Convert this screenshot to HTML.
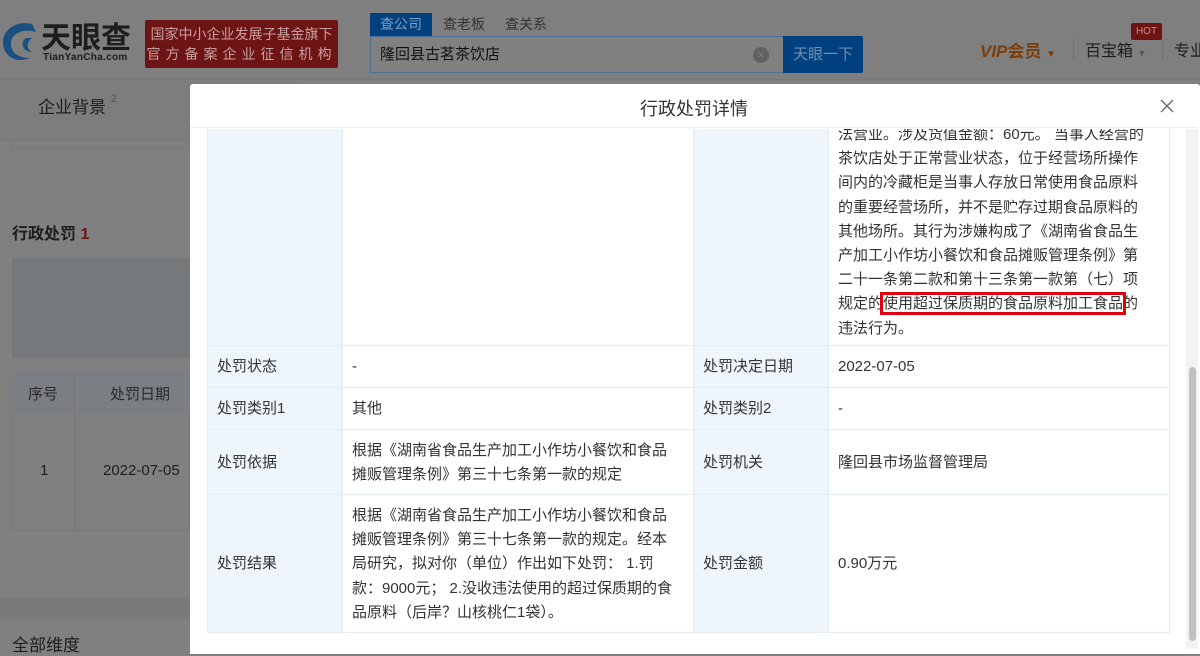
<!DOCTYPE html>
<html><head><meta charset="utf-8">
<style>
*{margin:0;padding:0;box-sizing:border-box}
body{width:1200px;height:649px;overflow:hidden;position:relative;background:#808080;font-family:"Liberation Sans","Noto Sans CJK SC",sans-serif;color:#333}
.a{position:absolute;white-space:nowrap}
.hdr{left:0;top:0;width:1200px;height:80px;background:#7f7f7f;border-bottom:1px solid #777}
td{border:1px solid #e4ecf3;font-size:15px;line-height:24.2px;color:#333;vertical-align:middle;padding:2px 12px 0 9px;font-family:"Liberation Sans","Noto Sans CJK SC",sans-serif}
td.l{background:#eef5fb}
td.r{padding-right:25px}
table{border-collapse:collapse;table-layout:fixed}
</style></head><body>
<div class="a hdr"></div>
<svg class="a" style="left:0;top:18px" width="40" height="46" viewBox="0 0 40 46"><path d="M32 6 C16 2 2 12 3 26 C4 38 16 46 30 40 C18 40 10 34 11 24 C12 16 22 10 36 14 Z" fill="#1b4f80"/><path d="M26 20 C20 24 22 34 32 34 C26 30 26 25 32 20 Z" fill="#1b4f80"/></svg>
<div class="a" style="left:41px;top:16px;font-size:30px;font-weight:bold;color:#1d1d1d;font-family:'Noto Sans CJK SC',sans-serif;line-height:38px">天眼查</div>
<div class="a" style="left:43px;top:52px;font-size:10px;color:#1d1d1d;font-weight:bold;letter-spacing:0.3px">TianYanCha.com</div>
<div class="a" style="left:145px;top:20px;width:193px;height:48px;background:#6d1414;border-radius:2px;color:#c9a0a0;font-size:14px;text-align:center;line-height:20px;padding-top:4px;font-family:'Noto Sans CJK SC',sans-serif">国家中小企业发展子基金旗下<br><span style="letter-spacing:5px">官方备案企业征信机构</span></div>
<div class="a" style="left:370px;top:13px;width:62px;height:23px;background:#00407f;color:#7f9fbf;font-size:14px;text-align:center;line-height:23px">查公司</div>
<div class="a" style="left:443px;top:13px;font-size:14px;line-height:23px;color:#333">查老板</div>
<div class="a" style="left:505px;top:13px;font-size:14px;line-height:23px;color:#333">查关系</div>
<div class="a" style="left:370px;top:36px;width:414px;height:37px;background:#808080;border:1px solid #4a6e94"></div>
<div class="a" style="left:380px;top:45px;font-size:15px;color:#111;line-height:20px">隆回县古茗茶饮店</div>
<div class="a" style="left:753px;top:47px;width:16px;height:16px;border-radius:50%;background:#606060;color:#808080;font-size:12px;text-align:center;line-height:16px">×</div>
<div class="a" style="left:783px;top:36px;width:80px;height:37px;background:#00407f;color:#6f8fb3;font-size:15px;text-align:center;line-height:37px;border-radius:0 2px 2px 0">天眼一下</div>
<div class="a" style="left:980px;top:37px;font-size:17px;font-weight:bold;color:#7a3d0b"><i>VIP</i>会员 <span style="font-size:10px">▼</span></div>
<div class="a" style="left:1073px;top:38px;width:1px;height:22px;background:#707070"></div>
<div class="a" style="left:1085px;top:37px;font-size:16px;color:#1d1d1d">百宝箱 <span style="font-size:9px;color:#555">▼</span></div>
<div class="a" style="left:1131px;top:23px;width:31px;height:17px;background:#6e1212;color:#c49090;font-size:10px;text-align:center;line-height:17px;border-radius:2px">HOT</div>
<div class="a" style="left:1162px;top:38px;width:1px;height:22px;background:#707070"></div>
<div class="a" style="left:1174px;top:37px;font-size:16px;color:#1d1d1d">专业</div>
<div class="a" style="left:0;top:81px;width:300px;height:60px;background:#7d7d7d;border-bottom:1px solid #777"></div>
<div class="a" style="left:38px;top:93px;font-size:17px;color:#1d1d1d">企业背景 <span style="font-size:11px;color:#555;vertical-align:top">2</span></div>
<div class="a" style="left:12px;top:140px;width:178px;height:9px;border:1px solid #777;border-top:none"></div>
<div class="a" style="left:12px;top:220px;font-size:16px;font-weight:bold;color:#1d1d1d">行政处罚 <span style="color:#6e1212">1</span></div>
<div class="a" style="left:12px;top:258px;width:178px;height:100px;background:#76797c"></div>
<div class="a" style="left:12px;top:371px;width:178px;height:160px;border:1px solid #777"></div>
<div class="a" style="left:12px;top:371px;width:178px;height:42px;background:#7b7f83"></div>
<div class="a" style="left:74px;top:372px;width:1px;height:159px;background:#777"></div>
<div class="a" style="left:28px;top:383px;font-size:15px;color:#2a2a2a">序号</div>
<div class="a" style="left:110px;top:383px;font-size:15px;color:#2a2a2a">处罚日期</div>
<div class="a" style="left:40px;top:462px;font-size:15px;color:#1d1d1d">1</div>
<div class="a" style="left:103px;top:462px;font-size:15px;color:#1d1d1d">2022-07-05</div>
<div class="a" style="left:0;top:598px;width:190px;height:1px;background:#777"></div>
<div class="a" style="left:0;top:599px;width:190px;height:20px;background:#7a7a7a"></div>
<div class="a" style="left:12px;top:631px;font-size:17px;color:#1d1d1d">全部维度</div>
<div class="a" style="left:190px;top:84px;width:1010px;height:570px;background:#fff;border-radius:3px 3px 0 0"></div>
<div class="a" style="left:190px;top:84px;width:1008px;height:44px;border-bottom:1px solid #eee"></div>
<div class="a" style="left:640px;top:95px;font-size:18px;color:#333">行政处罚详情</div>
<svg class="a" style="left:1160px;top:99px" width="14" height="14"><path d="M1 1L13 13M13 1L1 13" stroke="#666" stroke-width="1.3"/></svg>
<div class="a" style="left:1186px;top:129px;width:12px;height:520px;background:#f3f3f3"></div>
<div class="a" style="left:1189px;top:367px;width:7px;height:274px;background:#c1c1c1;border-radius:4px"></div>
<div class="a" style="left:190px;top:129px;width:996px;height:520px;overflow:hidden">
<table class="a" style="left:17px;top:-8px;width:962px;white-space:normal">
<colgroup><col style="width:135px"><col style="width:351px"><col style="width:135px"><col style="width:341px"></colgroup>
<tr style="height:224px"><td class="l"></td><td></td><td class="l"></td><td class="r" style="vertical-align:top;padding-top:1px">法营业。涉及货值金额：60元。 当事人经营的茶饮店处于正常营业状态，位于经营场所操作间内的冷藏柜是当事人存放日常使用食品原料的重要经营场所，并不是贮存过期食品原料的其他场所。其行为涉嫌构成了《湖南省食品生产加工小作坊小餐饮和食品摊贩管理条例》第二十一条第二款和第十三条第一款第（七）项规定的<span style="outline:3px solid #e00010">使用超过保质期的食品原料加工食品</span>的违法行为。</td></tr>
<tr style="height:42px"><td class="l">处罚状态</td><td>-</td><td class="l">处罚决定日期</td><td>2022-07-05</td></tr>
<tr style="height:42px"><td class="l">处罚类别1</td><td>其他</td><td class="l">处罚类别2</td><td>-</td></tr>
<tr style="height:65px"><td class="l">处罚依据</td><td>根据《湖南省食品生产加工小作坊小餐饮和食品摊贩管理条例》第三十七条第一款的规定</td><td class="l">处罚机关</td><td>隆回县市场监督管理局</td></tr>
<tr style="height:138px"><td class="l">处罚结果</td><td>根据《湖南省食品生产加工小作坊小餐饮和食品摊贩管理条例》第三十七条第一款的规定。经本局研究，拟对你（单位）作出如下处罚： 1.罚款：9000元； 2.没收违法使用的超过保质期的食品原料（后岸？山核桃仁1袋）。</td><td class="l">处罚金额</td><td>0.90万元</td></tr>
</table>
</div>
</body></html>
